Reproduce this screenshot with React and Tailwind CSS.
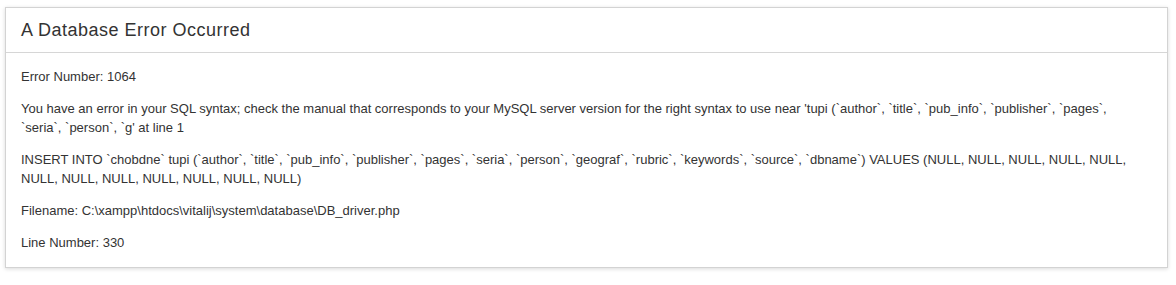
import React from "react";

const paragraphs = [
  "Error Number: 1064",
  "You have an error in your SQL syntax; check the manual that corresponds to your MySQL server version for the right syntax to use near 'tupi (`author`, `title`, `pub_info`, `publisher`, `pages`, `seria`, `person`, `g' at line 1",
  "INSERT INTO `chobdne` tupi (`author`, `title`, `pub_info`, `publisher`, `pages`, `seria`, `person`, `geograf`, `rubric`, `keywords`, `source`, `dbname`) VALUES (NULL, NULL, NULL, NULL, NULL, NULL, NULL, NULL, NULL, NULL, NULL, NULL)",
  "Filename: C:\\xampp\\htdocs\\vitalij\\system\\database\\DB_driver.php",
  "Line Number: 330",
];

export default function App() {
  return (
    <div
      className="min-h-[285px] bg-white pl-[5px] pr-[8px] pt-[7px] text-[#333]"
      style={{ fontFamily: '"Liberation Sans", Arial, sans-serif' }}
    >
      <div className="border border-[#d3d3d3] bg-white shadow-[0_1px_4px_rgba(0,0,0,0.15)]">
        <div className="flex h-[45px] items-center border-b border-[#d6d6d6] px-[15px]">
          <h1 className="text-[18px] leading-[20px] tracking-[0.5px] text-[#333]">
            A Database Error Occurred
          </h1>
        </div>
        <div className="pl-[15px] pr-[24px] pb-[15px] pt-[14px] text-[13px] leading-[19px]">
          {paragraphs.map((p, i) => (
            <p key={i} className={i < paragraphs.length - 1 ? "mb-[13px]" : ""}>
              {p}
            </p>
          ))}
        </div>
      </div>
    </div>
  );
}
